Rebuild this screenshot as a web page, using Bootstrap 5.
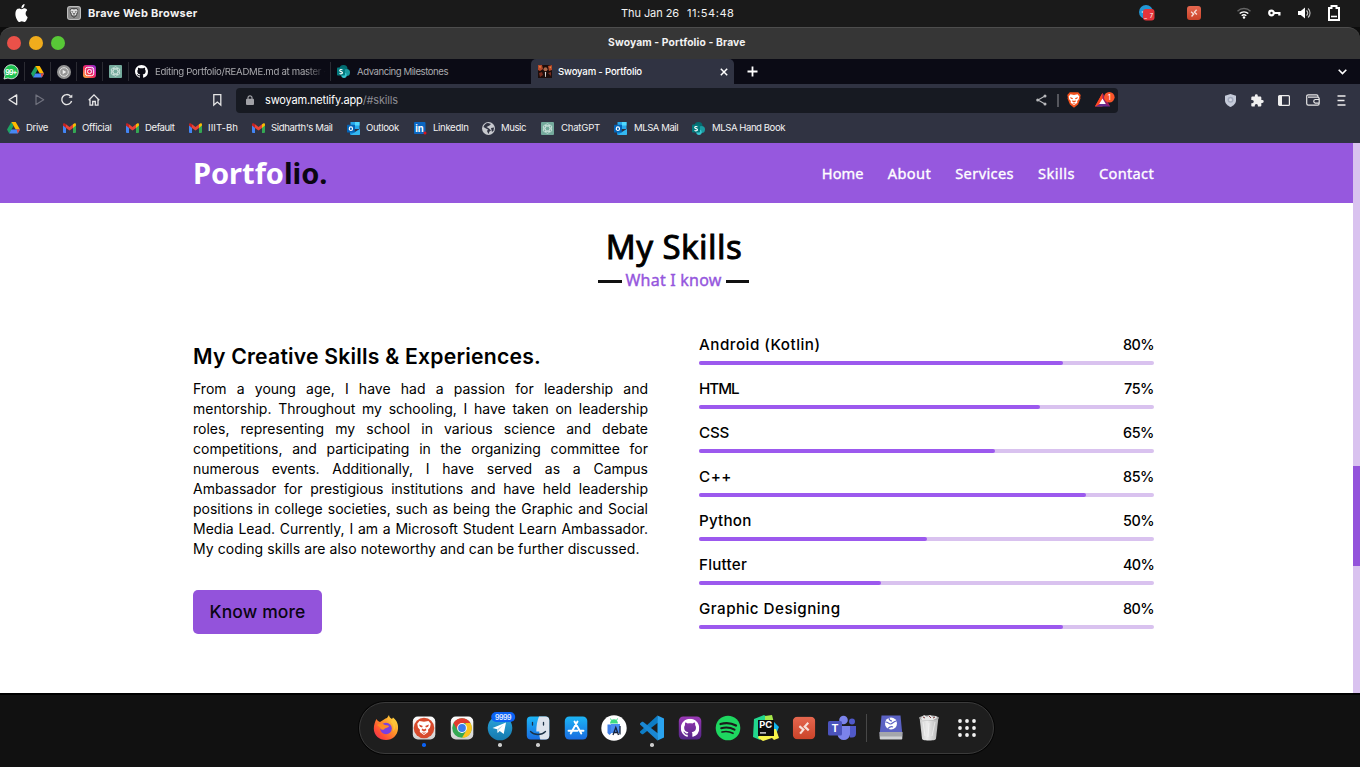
<!DOCTYPE html>
<html lang="en">
<head>
<meta charset="utf-8">
<meta name="viewport" content="width=device-width, initial-scale=1">
<title>Swoyam - Portfolio</title>
<link href="https://cdn.jsdelivr.net/npm/bootstrap@5.3.0/dist/css/bootstrap.min.css" rel="stylesheet">
<script src="https://cdn.jsdelivr.net/npm/bootstrap@5.3.0/dist/js/bootstrap.bundle.min.js" defer></script>
<style>
  :root { --violet:#9556dd; --violet-soft:#d9c2ef; --chrome:#303342; }
  html, body { height:767px; overflow:hidden; }
  body { background:#111; font-family:Inter,sans-serif; font-size:10px; line-height:14px; color:#f2f2f2; }
  svg { display:block; flex:none; overflow:visible; }
  svg text { font-family:Inter,sans-serif; }
  .strip { display:grid; align-items:center; white-space:nowrap; }
  .strip > * { min-width:0; }

  /* desktop bar */
  .desk { height:27px; background:#1a1a1a; grid-template-columns:14px 53px 21px 533px 66px 452px 48px 50px 31px 30px 30px 1fr; font-size:11px; }
  .desk > * { margin-top:-1px; }
  .brand-app { font-weight:700; }
  /* window frame */
  .frame-wrap { background:#0d0d0d; }
  .frame { height:32px; background:#363636; border-top:1px solid #4d4d4d; border-radius:12px 12px 0 0; grid-template-columns:7px 22px 22px 557px 1fr; font-weight:700; font-size:10.3px; padding-bottom:1px; }
  .dot { width:14px; height:14px; border-radius:50%; }
  .dot-close { background:#ea5149; }
  .dot-min { background:#f0ac1c; }
  .dot-max { background:#58c837; }
  .frame > span:last-child { margin-top:-2px; }
  /* tabs */
  .tabs { height:25px; background:#0b0b15; grid-template-columns:4px 20px 26px 26px 26px 26px 202px 201px 203px 13px 591px 1fr; color:#a9a9ad; font-size:9.6px; }
  .tab-cell { height:19px; display:flex; align-items:center; border-left:1px solid #2b2b33; padding-left:6px; gap:7px; }
  .tab-on { height:25px; background:var(--chrome); border-radius:5px 5px 0 0; color:#fff; display:grid; grid-template-columns:20px 162px 1fr; align-items:center; padding-left:7px; font-weight:500; }
  .fade-end { -webkit-mask-image:linear-gradient(90deg,#000 88%,transparent); mask-image:linear-gradient(90deg,#000 88%,transparent); }
  /* toolbar */
  .tools { height:32px; background:var(--chrome); grid-template-columns:8px 27px 26px 27px 125px 23px 882px 107px 26px 27px 28px 31px 1fr; }
  .addr { height:25px; background:#171a22; border-radius:4px; display:grid; grid-template-columns:10px 19px 771px 21px 10px 28px 1fr; align-items:center; font-size:11px; color:#fff; }
  .addr i { font-style:normal; color:#8c8c92; }
  /* bookmarks */
  .marks { height:27px; padding:0 0 3px 7px; background:var(--chrome); grid-template-columns:56px 63px 63px 63px 95px 67px 68px 59px 73px 78px 1fr; font-size:9.6px; }
  .marks > div { display:flex; align-items:center; gap:6px; }
  .marks > div:nth-last-child(-n+3) { gap:7px; }

  /* site */
  .site { height:550px; background:#fff; color:#000; }
  .site-bar { height:60px; background:#9658de; font-family:"Noto Sans",sans-serif; padding:0 199px 0 193px; }
  .logo { font-size:29px; font-weight:700; color:#fff; line-height:60px; }
  .logo i { font-style:normal; color:#0b0612; }
  .site-bar nav a { font-size:14.6px; line-height:20px; color:#fff; text-decoration:none; -webkit-text-stroke:.35px #fff; }
  .ttl { font-family:"Noto Sans",sans-serif; font-weight:400; font-size:33px; line-height:40px; padding:24px 5px 0 0; -webkit-text-stroke:.9px #000; }
  .subttl { font-family:"Noto Sans",sans-serif; font-size:16px; line-height:20px; color:var(--violet); padding:3px 6px 0 0; -webkit-text-stroke:.4px var(--violet); }
  .subttl hr { width:23.5px; height:3px; margin:3px 0 0; border:0; background:#111; opacity:1; }
  .content-row { padding-left:193px; }
  .about { width:455px; padding-top:53px; }
  .about h2 { font-size:21.2px; font-weight:600; line-height:26px; margin:0 0 10px; }
  .about p { font-size:14px; line-height:20px; margin:0 0 31px; }
  .about p > span { display:block; text-align:justify; text-align-last:justify; white-space:nowrap; }
  .about p > span:last-child { text-align-last:left; }
  .more { width:129px; height:44px; border-radius:5px; background:#9353db; font-size:17.5px; font-weight:500; color:#0a0512; border:0; padding:0; }
  .skills { width:455px; margin-left:51px; padding-top:43.6px; font-size:15.2px; font-weight:500; }
  .skill { height:44.1px; }
  .skill > div:first-child { height:27px; line-height:22.4px; }
  .pct { font-size:14.4px; }
  .bar { height:4.1px; border-radius:3px; background:var(--violet-soft); }
  .bar div { height:100%; border-radius:3px; background:#9c59ee; }
  .rail { width:7px; background:var(--violet-soft); padding-top:323px; }
  .rail div { height:100px; background:#9353db; }

  /* dock */
  .dock-area { height:74px; border-top:2px solid #000; background:#111; padding:7px 0 0 359px; }
  .dock { width:635px; height:52px; border-radius:26px; background:#1e1e1e; border:1px solid #3b3b3b; box-shadow:0 0 0 1px #050505; padding-left:7px; display:grid; grid-template-columns:repeat(13,38px) 11px repeat(3,38px); }
  .dock > div { display:flex; flex-direction:column; align-items:center; padding-top:11px; gap:1px; }
  .dock .on::after { content:""; width:3.5px; height:3.5px; border-radius:50%; background:#ccc; }
  .dock .cur::after { background:#0a62f5; }
  .cut span { width:1px; height:28px; background:#484848; }
</style>
</head>
<body>

<svg width="0" height="0" style="position:absolute" aria-hidden="true">
  <defs>
    <linearGradient id="gSky" x2="0" y2="1"><stop stop-color="#1cb5f5"/><stop offset="1" stop-color="#1a6ce0"/></linearGradient>
    <linearGradient id="gTele" x2="0" y2="1"><stop stop-color="#2ba5dc"/><stop offset="1" stop-color="#1579ad"/></linearGradient>
    <linearGradient id="gInsta" x1="0" y1="1" x2="1" y2="0"><stop stop-color="#fdc13a"/><stop offset=".4" stop-color="#f5344e"/><stop offset=".7" stop-color="#d3209b"/><stop offset="1" stop-color="#7a37d8"/></linearGradient>
    <linearGradient id="gRed" x2="0" y2="1"><stop stop-color="#e5674f"/><stop offset="1" stop-color="#cb4329"/></linearGradient>
    <linearGradient id="gPurple" x2="0" y2="1"><stop stop-color="#9a39b5"/><stop offset="1" stop-color="#532586"/></linearGradient>
    <linearGradient id="gFox" x1="1" y1="0" x2="0" y2="1"><stop stop-color="#fff04a"/><stop offset=".4" stop-color="#ff9a28"/><stop offset=".75" stop-color="#ff4a35"/><stop offset="1" stop-color="#e22a63"/></linearGradient>
    <linearGradient id="gCan" x2="1"><stop stop-color="#c9c9c9"/><stop offset=".4" stop-color="#ececec"/><stop offset="1" stop-color="#b5b5b5"/></linearGradient>
    <linearGradient id="gWhite" x2="0" y2="1"><stop stop-color="#fff"/><stop offset="1" stop-color="#cfcfcf"/></linearGradient>
    <symbol id="drive" viewBox="0 0 13 12"><path fill="#1ea362" d="M4.400 0 6.600 3.800 2.200 11.400 0 7.600z"/><path fill="#ffba00" d="M4.400 0h4.300L13 7.600H8.700z"/><path fill="#4688f4" d="M4.300 7.600H13l-2.200 3.800H2.200z"/><path fill="#ea4335" d="m10.800 11.400 2.200-3.800H9.600z"/></symbol>
    <symbol id="gmail" viewBox="0 0 13 10"><path fill="#4285f4" d="M0 1.800 3 4v6H.9A.9.9 0 0 1 0 9.100z"/><path fill="#34a853" d="M10 4l3-2.200v7.300a.9.9 0 0 1-.9.9H10z"/><path fill="#fbbc04" d="M10 1.300 11.100.4C12-.2 13 .3 13 1.500v1L10 4.900z"/><path fill="#ea4335" d="M3 4.900V1.300L6.500 4 10 1.300v3.600L6.500 7.500z"/><path fill="#c5221f" d="M0 1.500C0 .3 1-.2 1.900.4L3 1.300v3.600L0 2.600z"/></symbol>
    <symbol id="gpt" viewBox="0 0 14 14"><rect width="14" height="14" rx="1" fill="#74aa9c"/><g fill="none" stroke="#e2f1ec" stroke-width=".7"><ellipse cx="7" cy="7" rx="2.500" ry="5.200"/><ellipse cx="7" cy="7" rx="2.500" ry="5.200" transform="rotate(60 7 7)"/><ellipse cx="7" cy="7" rx="2.500" ry="5.200" transform="rotate(120 7 7)"/></g></symbol>
    <symbol id="outlook" viewBox="0 0 13 13"><path fill="#28a8ea" d="M3.500 0h9v7h-9z"/><path fill="#0a5fb4" d="M3.500 3H8v4H3.500z"/><path fill="#50d9ff" d="M8 0h4.500v3.500H8z"/><path fill="#1490df" d="M3 7l5 3 5-3v5a1 1 0 0 1-1 1H4a1 1 0 0 1-1-1z"/><path fill="#35b8f1" d="M3.500 13 13 7v5a1 1 0 0 1-1 1z"/><rect y="2.800" width="7.800" height="7.800" rx=".7" fill="#0364b8"/><ellipse cx="3.900" cy="6.700" rx="1.600" ry="1.800" fill="none" stroke="#fff" stroke-width="1.200"/></symbol>
    <symbol id="share-pt" viewBox="0 0 13 13"><circle cx="6.500" cy="4" r="4" fill="#036c70"/><circle cx="9.500" cy="7.500" r="3.500" fill="#1a9ba1"/><circle cx="7" cy="10.300" r="2.700" fill="#37c6d0"/><rect y="2.600" width="8" height="8" rx=".8" fill="#03787c"/><path d="M5.500 4.900C4.500 4.200 2.700 4.300 2.700 5.500c0 1.500 2.800.8 2.800 2.300 0 1.200-1.900 1.300-3 .6" fill="none" stroke="#fff" stroke-width="1.100"/></symbol>
    <symbol id="gh" viewBox="0 0 16 16"><path d="M8 0C3.580 0 0 3.580 0 8c0 3.540 2.290 6.530 5.470 7.590.4.070.550-.170.550-.380 0-.190-.010-.820-.010-1.490-2.010.370-2.530-.490-2.690-.940-.090-.230-.480-.940-.820-1.130-.280-.150-.680-.520-.010-.530.630-.010 1.080.580 1.230.820.720 1.210 1.870.870 2.330.660.070-.520.280-.870.510-1.070-1.780-.2-3.640-.890-3.640-3.950 0-.870.310-1.590.820-2.150-.080-.2-.360-1.020.080-2.120 0 0 .670-.210 2.200.820.640-.180 1.320-.270 2-.270s1.360.090 2 .270c1.530-1.040 2.200-.820 2.200-.820.440 1.100.160 1.920.080 2.120.510.560.820 1.270.820 2.150 0 3.070-1.870 3.750-3.650 3.950.290.250.540.730.540 1.480 0 1.070-.010 1.930-.010 2.200 0 .210.150.460.550.380A8.010 8.010 0 0 0 16 8c0-4.420-3.580-8-8-8"/></symbol>
    <symbol id="anydesk" viewBox="0 0 24 24"><rect width="24" height="24" rx="5" fill="url(#gRed)"/><g fill="none" stroke="#f7ded8" stroke-width="2.300"><path d="m7 10 4.300 3.800L7.800 18"/><path d="m16.500 6.500-3.800 4 4.300 4"/></g></symbol>
    <symbol id="lion" viewBox="0 0 20 24"><path d="M4 1h12l3.500 4-.7 3 .4 2-3.500 8.500L10 23l-5.700-4.500L.8 10l.4-2L.5 5z"/></symbol>
    <!-- lion mask with the eyes and muzzle left open -->
    <symbol id="lionface" viewBox="0 0 20 24"><path fill-rule="evenodd" d="m5 4 5 .8L15 4l2.500 3-.8 4-2.200 2.500.2 2.500L10 19.500l-4.700-3.500.2-2.500-2.200-2.500-.8-4zM4.500 7.800l1 2.600 2.300.6.800-1.500zM15.500 7.800l-1 2.600-2.300.6-.8-1.500zM8 12.300 7.300 14.200l2.700 1.400 2.700-1.400-.7-1.900-2 1zM7.300 16.300l2.700 2 2.700-2-2.700.6z"/></symbol>
  </defs>
</svg>

<!-- desktop bar -->
<header class="strip desk">
  <span></span>
  <svg width="15" height="18" viewBox="0 0 16 16" preserveAspectRatio="none" fill="#fff"><path d="M11.182.008C11.148-.03 9.923.023 8.857 1.180c-1.066 1.156-.902 2.482-.878 2.516s1.520.087 2.475-1.258.762-2.391.728-2.430m3.314 11.733c-.048-.096-2.325-1.234-2.113-3.422s1.675-2.789 1.698-2.854-.597-.79-1.254-1.157a3.700 3.700 0 0 0-1.563-.434c-.108-.003-.483-.095-1.254.116-.508.139-1.653.589-1.968.607-.316.018-1.256-.522-2.267-.665-.647-.125-1.333.131-1.824.328-.49.196-1.422.754-2.074 2.237-.652 1.482-.311 3.830-.067 4.560s.625 1.924 1.273 2.796c.576.984 1.340 1.667 1.659 1.899s1.219.386 1.843.067c.502-.308 1.408-.485 1.766-.472.357.013 1.061.154 1.782.539.571.197 1.111.115 1.652-.105.541-.221 1.324-1.059 2.238-2.758q.520-1.185.473-1.282"/></svg>
  <svg width="14" height="14"><rect width="14" height="14" rx="3" fill="#bdbdbd"/><rect x="1" y="1" width="12" height="12" rx="2" fill="#8b8b8b"/><use href="#lion" x="2" y="1.500" width="10" height="11" fill="#4b4b4b"/><use href="#lionface" x="2" y="1.200" width="10" height="11.500" fill="#e3e3e3"/></svg>
  <span><span class="brand-app" data-w="109.500">Brave Web Browser</span></span>
  <span><span data-w="58">Thu Jan 26</span></span>
  <span><span data-w="47.500">11:54:48</span></span>
  <svg width="16" height="16"><circle cx="7" cy="7" r="7" fill="#2296d4"/><path d="M2 7l3-1v2z" fill="#fff"/><rect x="4" y="4" width="11.500" height="11.500" rx="3" fill="#e5343a"/><text x="5.200" y="13" font-size="6" fill="#fff" textLength="9">_7</text></svg>
  <svg width="14" height="14"><use href="#anydesk" width="14" height="14"/></svg>
  <svg width="14" height="12" fill="none" stroke-width="1.400"><path d="M.5 4.200a9.200 9.200 0 0 1 13 0" stroke="#666"/><path d="M2.700 6.600a6.100 6.100 0 0 1 8.600 0M4.700 8.800a3.300 3.300 0 0 1 4.600 0" stroke="#fff"/><circle cx="7" cy="10.500" r="1.200" fill="#fff"/></svg>
  <svg width="13" height="8"><circle cx="3.500" cy="4" r="2.300" fill="none" stroke="#fff" stroke-width="2.200"/><path d="M6 3h6.500v3.500h-2.300V5H6z" fill="#fff"/></svg>
  <svg width="13" height="12"><path d="M0 4h2.800L7 .5v11L2.800 8H0z" fill="#fff"/><path d="M8.500 3.500a3.200 3.200 0 0 1 0 5M10 1.500a6 6 0 0 1 0 9" fill="none" stroke="#bbb" stroke-width="1.200"/></svg>
  <svg width="12" height="16"><path d="M1 3h2.500V1h5v2H11v12H1z" fill="none" stroke="#fff" stroke-width="2"/><path d="M3 11.500h6" stroke="#fff" stroke-width="1.600"/></svg>
</header>

<!-- window frame -->
<div class="frame-wrap"><div class="strip frame">
  <span></span><span class="dot dot-close"></span><span class="dot dot-min"></span><span class="dot dot-max"></span>
  <span><span data-w="137.500">Swoyam - Portfolio - Brave</span></span>
</div></div>

<!-- tabs -->
<div class="strip tabs">
  <span></span>
  <svg width="14" height="14"><path d="M0 14l1-4a7 7 0 1 1 3 3z" fill="#1ec252" stroke="#fff" stroke-width=".8"/><text x="1.300" y="9.700" font-size="7" font-weight="700" fill="#fff" textLength="12">99+</text></svg>
  <div class="tab-cell"><svg width="13" height="12"><use href="#drive" width="13" height="12"/></svg></div>
  <div class="tab-cell"><svg width="14" height="14"><circle cx="7" cy="7" r="7" fill="#949494"/><circle cx="7" cy="7" r="4.300" fill="none" stroke="#ddd"/><path d="M5.700 4.800 9.300 7 5.700 9.200z" fill="#eee"/></svg></div>
  <div class="tab-cell"><svg width="13" height="13"><rect width="13" height="13" rx="3" fill="url(#gInsta)"/><rect x="2.300" y="2.300" width="8.400" height="8.400" rx="2.300" fill="none" stroke="#fff"/><circle cx="6.500" cy="6.500" r="2" fill="none" stroke="#fff"/><circle cx="9" cy="4" r=".6" fill="#fff"/></svg></div>
  <div class="tab-cell"><svg width="13" height="13"><use href="#gpt" width="13" height="13"/></svg></div>
  <div class="tab-cell"><svg width="13" height="13" fill="#fff"><use href="#gh" width="13" height="13"/></svg><span class="fade-end"><span data-w="171">Editing Portfolio/README.md at master ·</span></span></div>
  <div class="tab-cell"><svg width="13" height="13"><use href="#share-pt" width="13" height="13"/></svg><span><span data-w="91">Advancing Milestones</span></span></div>
  <div class="tab-on">
    <svg width="14" height="13"><path fill="#1c0d0b" d="M0 0h14v13H0z"/><path fill="#b5482b" d="M0 0h4l1 4-3 2-2-1zM10 1l4-1v5l-3 1z"/><path fill="#e8913f" d="m1 1 2 .5-1 2zM11 2l2-.5v2z"/><path fill="#7a2c1e" d="m1 8 3-1 1 3-3 2zM10 8l3-1v4z"/><circle cx="7.500" cy="4.200" r="2" fill="#a9694c"/><path fill="#ddd" d="M6.900 7h1.200l-.2 5h-.7z"/></svg>
    <span><span data-w="84">Swoyam - Portfolio</span></span>
    <svg width="8" height="8"><path d="M.8.800l6.400 6.400m0-6.400-6.400 6.400" stroke="#fff" stroke-width="1.500"/></svg>
  </div>
  <span></span>
  <svg width="11" height="11"><path d="M5.500.5v10M.5 5.500h10" stroke="#fff" stroke-width="1.800"/></svg>
  <svg width="9" height="6"><path d="m.7.800 3.800 3.800L8.300.8" fill="none" stroke="#fff" stroke-width="1.600"/></svg>
</div>

<!-- toolbar -->
<div class="strip tools">
  <span></span>
  <svg width="10" height="12"><path d="M8.700.9v9.700L1 5.800z" fill="none" stroke="#e6e6e6" stroke-width="1.300" stroke-linejoin="round"/></svg>
  <svg width="10" height="12"><path d="M1 .9v9.700l7.700-4.900z" fill="none" stroke="#70727e" stroke-width="1.200" stroke-linejoin="round"/></svg>
  <svg width="12" height="12"><path d="M9.500 2.200A5 5 0 1 0 10.600 7" fill="none" stroke="#e6e6e6" stroke-width="1.400"/><path d="M7.500 3.800h3.800V.5z" fill="#e6e6e6"/></svg>
  <svg width="12" height="12"><path d="M.7 6.300 6 .9l5.300 5.400M2 5.500v5.700h2.700V7.500h2.600v3.700H10V5.500" fill="none" stroke="#e6e6e6" stroke-width="1.300"/></svg>
  <svg width="9" height="12"><path d="M.8.700h7v10.300L4.300 8 .8 11z" fill="none" stroke="#e6e6e6" stroke-width="1.300"/></svg>
  <div class="addr">
    <span></span>
    <svg width="8" height="10"><path d="M2 4.500V2.800a2 2 0 0 1 4 0v1.700" fill="none" stroke="#a0a1a6" stroke-width="1.200"/><rect y="3.800" width="8" height="6.200" rx="1" fill="#a0a1a6"/></svg>
    <span><span data-w="133">swoyam.netlify.app<i>/#skills</i></span></span>
    <svg width="11" height="12"><path d="M9 2 2 6l7 4" fill="none" stroke="#b8b9bc" stroke-width="1.100"/><g fill="#b8b9bc"><circle cx="9" cy="2" r="1.500"/><circle cx="1.700" cy="6" r="1.500"/><circle cx="9" cy="10" r="1.500"/></g></svg>
    <svg width="2" height="13"><path d="M1 0v13" stroke="#77787e" stroke-width="1.300"/></svg>
    <svg width="14" height="16"><use href="#lion" x="-.5" y="-.5" width="15" height="17" fill="#f4511c"/><use href="#lionface" x="-.5" y="-.5" width="15" height="17" fill="#fff"/></svg>
    <svg width="20" height="16"><path d="M7.500 1 0 14.500h7.500z" fill="#ff4724"/><path d="M7.500 1 15 14.500H0l7.500-4z" fill="#662d91"/><path d="M7.500 1 15 14.500l-4-2-3.500-6z" fill="#9e1f63"/><path d="M7.500 1 0 14.500l4-2 3.500-6z" fill="#ff4724"/><path d="m7.500 6.500 3.300 5.600H4.200z" fill="#fff"/><circle cx="14.300" cy="5.300" r="5.300" fill="#fb542b"/><text x="12.800" y="8" font-size="7.500" fill="#fff">1</text></svg>
  </div>
  <span></span>
  <svg width="11" height="13"><path d="M5.500 0 11 1.800v4.500c0 3.200-2.500 5.500-5.500 6.700C2.500 11.800 0 9.500 0 6.300V1.800z" fill="#c5cbd9"/><circle cx="5.500" cy="5.800" r="3" fill="#a3abbe"/><circle cx="5.500" cy="5.800" r="1.500" fill="#d5d9e4"/></svg>
  <svg width="13" height="13" viewBox="1.500 1 22 21.500" fill="#f0f0f0"><path d="M20.500 11H19V7c0-1.100-.9-2-2-2h-4V3.500a2.500 2.500 0 0 0-5 0V5H4c-1.100 0-2 .9-2 2v3.800h1.500a2.700 2.700 0 0 1 0 5.400H2V20c0 1.100.9 2 2 2h3.800v-1.500a2.700 2.700 0 0 1 5.400 0V22H17c1.100 0 2-.9 2-2v-4h1.500a2.500 2.500 0 0 0 0-5z"/></svg>
  <svg width="12" height="11"><rect x=".6" y=".6" width="10.800" height="9.800" rx="1" fill="none" stroke="#ededed" stroke-width="1.200"/><path d="M1 1h3v9H1z" fill="#ededed"/></svg>
  <svg width="14" height="12"><path d="M2 3.200h9.500M12 3V2.300c0-.9-.6-1.500-1.500-1.500H2.300C1.200.800.700 1.500.7 2.400v7c0 1 .7 1.700 1.700 1.700h9.200c1 0 1.600-.6 1.600-1.600V5c0-1-.6-1.700-1.600-1.700" fill="none" stroke="#e6e6e6" stroke-width="1.200"/><path d="M13 5.500H9.200a1.900 1.900 0 0 0 0 3.700H13" fill="none" stroke="#e6e6e6" stroke-width="1.200"/></svg>
  <svg width="9" height="11"><path d="M.5 1h8M.5 5.500h7M.5 10h8" stroke="#ededed" stroke-width="1.400"/></svg>
</div>

<!-- bookmarks -->
<div class="strip marks">
  <div><svg width="13" height="12"><use href="#drive" width="13" height="12"/></svg><span><span data-w="22">Drive</span></span></div>
  <div><svg width="13" height="10"><use href="#gmail" width="13" height="10"/></svg><span><span data-w="29.500">Official</span></span></div>
  <div><svg width="13" height="10"><use href="#gmail" width="13" height="10"/></svg><span><span data-w="29.500">Default</span></span></div>
  <div><svg width="13" height="10"><use href="#gmail" width="13" height="10"/></svg><span><span data-w="30">IIIT-Bh</span></span></div>
  <div><svg width="13" height="10"><use href="#gmail" width="13" height="10"/></svg><span><span data-w="61.500">Sidharth's Mail</span></span></div>
  <div><svg width="13" height="13"><use href="#outlook" width="13" height="13"/></svg><span><span data-w="33">Outlook</span></span></div>
  <div><svg width="13" height="13"><rect y="0" width="11.500" height="12" rx="1" fill="#0a66c2"/><text x="1.200" y="9.800" font-size="9.500" font-weight="700" fill="#fff">in</text><circle cx="11" cy="11" r="1.500" fill="#d9151c"/></svg><span><span data-w="35.500">LinkedIn</span></span></div>
  <div><svg width="13" height="13"><circle cx="6.500" cy="6.500" r="6.500" fill="#c7c9ce"/><path d="M6 1c-2 0-4 2-4.500 4L4 6.500l2 1L5 9l1.500 3 1-2.500 1.500-1L7 6.500 4.500 5l3-1.500L9 2z" fill="#303342"/><path d="m9 6 3-.5-.5 3L10 10z" fill="#303342"/></svg><span><span data-w="25">Music</span></span></div>
  <div><svg width="13" height="13"><use href="#gpt" width="13" height="13"/></svg><span><span data-w="39">ChatGPT</span></span></div>
  <div><svg width="13" height="13"><use href="#outlook" width="13" height="13"/></svg><span><span data-w="44">MLSA Mail</span></span></div>
  <div><svg width="13" height="13"><use href="#share-pt" width="13" height="13"/></svg><span><span data-w="73">MLSA Hand Book</span></span></div>
</div>

<!-- web page -->
<div class="site d-flex">
  <main class="flex-grow-1">
    <div class="site-bar d-flex align-items-center justify-content-between">
      <div class="logo"><span data-w="134.500">Portfo<i>lio.</i></span></div>
      <nav class="d-flex gap-4">
        <a href="#home"><span data-w="42">Home</span></a>
        <a href="#about"><span data-w="43.500">About</span></a>
        <a href="#services"><span data-w="58.800">Services</span></a>
        <a href="#skills"><span data-w="37">Skills</span></a>
        <a href="#contact"><span data-w="55">Contact</span></a>
      </nav>
    </div>
    <h1 class="ttl text-center m-0"><span data-w="136.500">My Skills</span></h1>
    <div class="subttl d-flex justify-content-center align-items-center gap-1"><hr><span><span data-w="96">What I know</span></span><hr></div>
    <div class="content-row d-flex">
      <section class="about">
        <h2><span data-w="348">My Creative Skills &amp; Experiences.</span></h2>
        <p>
          <span>From a young age, I have had a passion for leadership and</span>
          <span>mentorship. Throughout my schooling, I have taken on leadership</span>
          <span>roles, representing my school in various science and debate</span>
          <span>competitions, and participating in the organizing committee for</span>
          <span>numerous events. Additionally, I have served as a Campus</span>
          <span>Ambassador for prestigious institutions and have held leadership</span>
          <span>positions in college societies, such as being the Graphic and Social</span>
          <span>Media Lead. Currently, I am a Microsoft Student Learn Ambassador.</span>
          <span><span data-w="446.500">My coding skills are also noteworthy and can be further discussed.</span></span>
        </p>
        <button class="more" type="button"><span data-w="96">Know more</span></button>
      </section>
      <section class="skills">
        <div class="skill"><div class="d-flex justify-content-between"><span><span data-w="121.500">Android (Kotlin)</span></span><span class="pct"><span data-w="31">80%</span></span></div><div class="bar"><div style="width:80%"></div></div></div>
        <div class="skill"><div class="d-flex justify-content-between"><span><span data-w="39.500">HTML</span></span><span class="pct"><span data-w="30">75%</span></span></div><div class="bar"><div style="width:75%"></div></div></div>
        <div class="skill"><div class="d-flex justify-content-between"><span><span data-w="30">CSS</span></span><span class="pct"><span data-w="31">65%</span></span></div><div class="bar"><div style="width:65%"></div></div></div>
        <div class="skill"><div class="d-flex justify-content-between"><span><span data-w="33">C++</span></span><span class="pct"><span data-w="31">85%</span></span></div><div class="bar"><div style="width:85%"></div></div></div>
        <div class="skill"><div class="d-flex justify-content-between"><span><span data-w="52.500">Python</span></span><span class="pct"><span data-w="31">50%</span></span></div><div class="bar"><div style="width:50%"></div></div></div>
        <div class="skill"><div class="d-flex justify-content-between"><span><span data-w="48">Flutter</span></span><span class="pct"><span data-w="31">40%</span></span></div><div class="bar"><div style="width:40%"></div></div></div>
        <div class="skill"><div class="d-flex justify-content-between"><span><span data-w="141.500">Graphic Designing</span></span><span class="pct"><span data-w="31">80%</span></span></div><div class="bar"><div style="width:80%"></div></div></div>
      </section>
    </div>
  </main>
  <div class="rail"><div></div></div>
</div>

<!-- dock -->
<footer class="dock-area">
  <div class="dock">
    <div><svg width="26" height="28"><path d="M3.500 5c1 2 2 2.500 3.500 3l4-2.500c1-1 2-1.500 3-1.500l2-3c0 2 1.500 3 3 4l1-1.500c4 3 5.500 7 5 11.500C24.400 21.500 19.500 26 13 26S.8 21.500.8 14.500C.8 11 2 7.500 3.500 5z" fill="url(#gFox)"/><circle cx="13" cy="14.500" r="5.800" fill="#7a3fe0"/><path d="M4 11c3-2 6-1 8 0 3 0 4 1 4 1.500-2 1.500-4 1.500-5 3-2 1-4-.5-4-2z" fill="#ff8a25"/><path d="M17.500 8c2.500 2 4 5 2.500 9.500 3-3 3-8 0-12z" fill="#ffc238"/></svg></div>
    <div class="on cur"><svg width="24" height="28"><rect x=".8" y="2.500" width="22.500" height="23" rx="5" fill="url(#gWhite)"/><circle cx="12" cy="14" r="10.300" fill="#d84a2c"/><use href="#lionface" x="3" y="3.500" width="18" height="21.600" fill="#fff"/></svg></div>
    <div><svg width="24" height="28"><rect x=".8" y="2.500" width="22.500" height="23" rx="5" fill="url(#gWhite)"/><circle cx="12" cy="14" r="9.800" fill="#35a853"/><path d="M3.500 9.100A9.800 9.800 0 0 1 20.500 9.100L12 9.100l-4.200 7.300z" fill="#e33b2e"/><path d="M20.500 9.100A9.800 9.800 0 0 1 12 23.800l4.300-7.400L15.500 9.100z" fill="#fcc31e"/><circle cx="12" cy="14" r="4.900" fill="#fff"/><circle cx="12" cy="14" r="3.900" fill="#3b7ded"/></svg></div>
    <div class="on"><svg width="26" height="28"><circle cx="13" cy="14" r="12.300" fill="url(#gTele)"/><path d="m5.500 14 13.500-5.500-2.300 11.500-4-3-2 2-.6-3.800z" fill="#fff"/><path d="m10.100 15.200 6.400-4.500-4.800 5.300-1 3z" fill="#b9d9ea"/><rect x="4.200" y="-2" width="24" height="10" rx="5" fill="#0a62f5"/><text x="8" y="5.600" font-size="7" font-weight="600" fill="#e6eeff" textLength="16.500">9999</text></svg></div>
    <div class="on"><svg width="24" height="28"><rect x=".8" y="2.500" width="22.500" height="23" rx="4" fill="url(#gSky)"/><path d="M13 2.500h6.300a4 4 0 0 1 4 4v15a4 4 0 0 1-4 4h-5c-.8-2.500-1-4.500-1-8h-3c0-6 1-11 2.700-15z" fill="#dde2ec"/><path d="M6.500 8.500v2.500M17.500 8.500v2.500M4.500 17.500c4 4 11 4 15 0" fill="none" stroke="#1d3147" stroke-width="1.300" stroke-linecap="round"/></svg></div>
    <div><svg width="24" height="28"><rect x=".8" y="2.500" width="22.500" height="23" rx="4.500" fill="url(#gSky)"/><path d="m13.500 7.500-6.800 12M10.500 7.500l6.800 12M4.500 16.700h9M15.800 16.700h3.700" stroke="#fff" stroke-width="1.900" stroke-linecap="round"/></svg></div>
    <div><svg width="26" height="28"><circle cx="13" cy="14" r="12.700" fill="#fff"/><path d="M6.500 10.500h5V18l-3 3-2-2z" fill="#3d7fe8"/><path d="M10 10h9v9h-9z" fill="#4a8df0"/><path d="M9 9.500a4 4.300 0 0 1 8 0z" fill="#3ddc84"/><path d="m9.500 4.500 1 2M16.500 4.500l-1 2" stroke="#3ddc84"/><path d="m12 21 2.800-7.500L17.500 21M13 18.500h3.500M19 12v8.500" stroke="#17233c" stroke-width="1.300" fill="none"/></svg></div>
    <div class="on"><svg width="26" height="28"><path d="M18.500 1.500 1 17.500v1l2 1.700h1L19 8.500z" fill="#0d7dc6"/><path d="M18.500 26.500 1 10.500v-1l2-1.700h1L19 19.500z" fill="#1a87d3"/><path d="M18.500 1.500 25 4.500v19l-6.500 3z" fill="#2aa3ef"/></svg></div>
    <div><svg width="24" height="28"><rect x=".8" y="2.500" width="22.500" height="23" rx="4.500" fill="url(#gPurple)"/><use href="#gh" x="2.800" y="4.800" width="18.500" height="18.500" fill="#fff"/></svg></div>
    <div><svg width="26" height="28"><circle cx="13" cy="14" r="12.300" fill="#1ed760"/><g fill="none" stroke="#1b1b1b" stroke-linecap="round"><path d="M5.500 10c5-1.500 11-1 15.500 1.500" stroke-width="2.300"/><path d="M6.200 14.200c4.500-1.200 9.500-.7 13.300 1.500" stroke-width="2"/><path d="M7 18c3.700-1 7.700-.5 11 1.300" stroke-width="1.600"/></g></svg></div>
    <div><svg width="26" height="28"><path d="m1 5 10-4 5 3-3 10-6 12-7-3z" fill="#22d78d"/><path d="m12 2 7-1 2 8h-9z" fill="#a5e84b"/><path d="m20 7 6 6-3 7-3-2z" fill="#12b5ea"/><path d="m5 24 3-8 15-1 3 9-5 2-2-2-9 3z" fill="#f7f34a"/><rect x="5" y="6" width="16" height="16" fill="#0d0d0d"/><text x="6.200" y="14.300" font-size="9" font-weight="700" fill="#fff" textLength="13" lengthAdjust="spacingAndGlyphs">PC</text><path d="M7 18.900h6" stroke="#fff" stroke-width="1.200"/></svg></div>
    <div><svg width="24" height="28"><use href="#anydesk" x=".8" y="2.500" width="22.500" height="23"/></svg></div>
    <div><svg width="28" height="28"><circle cx="15.500" cy="6" r="4.300" fill="#7b83eb"/><circle cx="24" cy="7.500" r="3" fill="#5059c9"/><path d="M20 12h8v7.500a4 4 0 0 1-4 4h-2z" fill="#5059c9"/><path d="M9 12h13v8.500a6.300 6.300 0 0 1-12.500 0z" fill="#7b83eb"/><rect y="7" width="14" height="14.500" rx="1.500" fill="#4b53bc"/><text x="3.600" y="18" font-size="10.500" font-weight="700" fill="#fff">T</text></svg></div>
    <div class="cut"><span></span></div>
    <div><svg width="24" height="28"><path d="M2.500 1.500h19L23.300 20H.7z" fill="#5b62c4"/><path d="M.7 18h22.600v6.500a1 1 0 0 1-1 1H1.700a1 1 0 0 1-1-1z" fill="#cfd1d4"/><path d="M.7 18h22.600v4.500H.7z" fill="#a4a6ab"/><circle cx="12" cy="9.500" r="6" fill="#fff"/><path d="M6.500 8c3 0 3 2 5 2s3-3 6-3M10 4c0 2 2 3 3 3M9 14.500c1-1 3-2.500 5-1.500" fill="none" stroke="#5b62c4" stroke-width="1.200"/></svg></div>
    <div><svg width="22" height="28"><path d="M1.500 3h19l-2.500 21.500c-.2 1.300-1.500 2-7 2s-6.800-.7-7-2z" fill="url(#gCan)"/><ellipse cx="11" cy="4" rx="9.800" ry="2.800" fill="#a9a9a9"/><path d="m3 4 3-3 3 2 3-2 3 2 3-1 1 2-4 2-5 .5L4 6z" fill="#e8e8e8"/><path d="m5 3 2 1M11 2l2 2M15 4l2-1" stroke="#7c3b3b"/><path d="m5 8 2 14M11 9l-1 14M17 8l-3 14" stroke="#fff" stroke-opacity=".5"/></svg></div>
    <div><svg width="20" height="28" fill="#f2f2f2"><g id="dots"><circle cx="3" cy="7" r="1.900"/><circle cx="10" cy="7" r="1.900"/><circle cx="17" cy="7" r="1.900"/></g><use href="#dots" y="7"/><use href="#dots" y="14"/></svg></div>
  </div>
</footer>

<script>
  // Track each label so that it fills its own slot width (data-w, in px).
  document.fonts.ready.then(() => {
    document.querySelectorAll('[data-w]').forEach(el => {
      const gap = el.dataset.w - el.getBoundingClientRect().width;
      el.style.letterSpacing = gap / el.textContent.length + 'px';
    });
  });
</script>
</body>
</html>
